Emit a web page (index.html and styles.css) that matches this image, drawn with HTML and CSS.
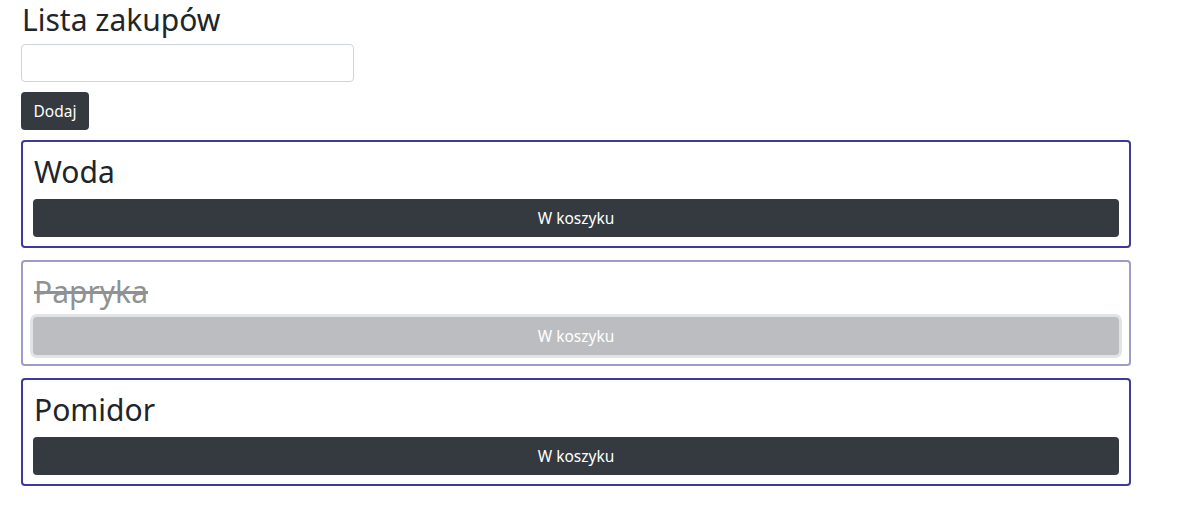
FILE: index.html
```html
<!DOCTYPE html>
<html lang="pl">
<head>
<meta charset="utf-8">
<title>Lista zakupów</title>
<link rel="stylesheet" href="styles.css">
</head>
<body>
<main class="app">
  <h2 class="title">Lista zakupów</h2>
  <input class="field" type="text">
  <button class="btn btn-add">Dodaj</button>
  <ul class="list">
    <li class="card">
      <h2 class="card-title">Woda</h2>
      <button class="btn btn-block">W koszyku</button>
    </li>
    <li class="card card-done">
      <h2 class="card-title">Papryka</h2>
      <button class="btn btn-block btn-focus" disabled>W koszyku</button>
    </li>
    <li class="card">
      <h2 class="card-title">Pomidor</h2>
      <button class="btn btn-block">W koszyku</button>
    </li>
  </ul>
</main>
</body>
</html>
```

FILE: styles.css
```css
* { box-sizing: border-box; }
html, body { margin: 0; padding: 0; background: #fff; }
body {
  font-family: "Noto Sans", "Open Sans", "Liberation Sans", sans-serif;
  font-size: 16px;
  color: #212529;
}
.app {
  width: 1110px;
  margin-left: 21px;
  display: flex;
  flex-direction: column;
  align-items: flex-start;
}
.title {
  margin: 0 0 4px 1px;
  font-size: 30px;
  font-weight: 400;
  line-height: 40px;
}
.field {
  width: 333px;
  height: 38px;
  border: 1px solid #ced4da;
  border-radius: 4px;
  padding: 6px 12px;
  font: inherit;
  margin: 0 0 10px 0;
}
.btn {
  height: 38px;
  border: 0;
  border-radius: 4px;
  background: #343a40;
  color: #fff;
  font-family: inherit;
  font-size: 15.5px;
  padding: 0 12px;
  cursor: pointer;
}
.btn-add { width: 68px; margin-bottom: 10px; }
.list {
  list-style: none;
  margin: 0;
  padding: 0;
  width: 100%;
  display: flex;
  flex-direction: column;
  gap: 12px;
}
.card {
  border: 2px solid #3f3997;
  border-radius: 4px;
  padding: 10px 10px 9px;
  height: 108px;
}
.card-title {
  margin: 0 0 7px 1px;
  font-size: 30px;
  font-weight: 400;
  line-height: 40px;
}
.btn-block { width: 100%; display: block; }
.card-done { opacity: 0.5; height: 106px; }
.card-done .card-title { text-decoration: line-through; margin-bottom: 5px; }
.btn-focus {
  opacity: 0.65;
  box-shadow: 0 0 0 3px rgba(82, 88, 93, 0.5);
}
```
